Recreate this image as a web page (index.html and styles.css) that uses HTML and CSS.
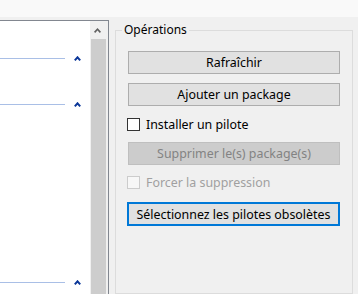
FILE: index.html
```html
<!DOCTYPE html>
<html lang="fr">
<head>
<meta charset="utf-8">
<link rel="stylesheet" href="styles.css">
</head>
<body>
<div class="window">
  <div class="topbar"></div>
  <div class="main">
    <div class="listbox">
      <div class="list-content">
        <div class="row r1"><span class="rule"></span><svg class="chev" width="7" height="5" viewBox="0 0 7 5"><polyline points="0.8,4.3 3.5,1.3 6.2,4.3" fill="none" stroke="#0b3799" stroke-width="2"/></svg></div>
        <div class="row r2"><span class="rule"></span><svg class="chev" width="7" height="5" viewBox="0 0 7 5"><polyline points="0.8,4.3 3.5,1.3 6.2,4.3" fill="none" stroke="#0b3799" stroke-width="2"/></svg></div>
        <div class="row r3"><span class="rule"></span><svg class="chev" width="7" height="5" viewBox="0 0 7 5"><polyline points="0.8,4.3 3.5,1.3 6.2,4.3" fill="none" stroke="#0b3799" stroke-width="2"/></svg></div>
      </div>
      <div class="scrollbar">
        <div class="arrow"><svg width="7" height="5" viewBox="0 0 7 5"><polyline points="0.6,4.4 3.5,1.2 6.4,4.4" fill="none" stroke="#606060" stroke-width="1.6"/></svg></div>
        <div class="thumb"></div>
      </div>
    </div>
    <fieldset class="ops">
      <legend class="ops-title">Opérations</legend>
      <button class="btn btn-first">Rafraîchir</button>
      <button class="btn btn-add">Ajouter un package</button>
      <label class="check check-install"><span class="box"></span><span class="check-text">Installer un pilote</span></label>
      <button class="btn btn-disabled" disabled>Supprimer le(s) package(s)</button>
      <label class="check check-disabled"><span class="box"></span><span class="check-text">Forcer la suppression</span></label>
      <button class="btn btn-focus">Sélectionnez les pilotes obsolètes</button>
    </fieldset>
  </div>
</div>
</body>
</html>
```

FILE: styles.css
```css
html, body {
  margin: 0;
  padding: 0;
}
body {
  width: 358px;
  height: 294px;
  overflow: hidden;
  background: #f0f0f0;
  font-family: "Noto Sans", "Open Sans", sans-serif;
  font-size: 12px;
  color: #000;
}
.window {
  display: flex;
  flex-direction: column;
  height: 294px;
}
.topbar {
  height: 17px;
  background: #f9f9f9;
  flex: none;
}
.main {
  display: flex;
  padding-top: 3px;
  flex: 1;
  min-height: 0;
}
.listbox {
  width: 109px;
  box-sizing: border-box;
  border-top: 1px solid #828790;
  border-right: 1px solid #828790;
  background: #f0f0f0;
  display: flex;
  flex: none;
}
.list-content {
  width: 90px;
  background: #fff;
  display: flex;
  flex-direction: column;
}
.row {
  display: flex;
  align-items: center;
  height: 5px;
}
.r1 { margin-top: 35px; }
.r2 { margin-top: 41px; }
.r3 { margin-top: 173px; }
.rule {
  display: block;
  width: 65px;
  height: 1px;
  background: #a9bfe6;
}
.chev {
  display: block;
  margin-left: 9px;
}
.scrollbar {
  width: 17px;
  display: flex;
  flex-direction: column;
  background: #f0f0f0;
}
.arrow {
  height: 17px;
  display: flex;
  align-items: center;
  justify-content: center;
  padding-right: 2px;
  box-sizing: border-box;
  padding-top: 2px;
}
.arrow svg { display: block; }
.thumb {
  flex: 1;
  margin: 1px 1px 0 1px;
  background: #cdcdcd;
}
.ops {
  box-sizing: border-box;
  width: 238px;
  min-width: 0;
  margin: 2px 0 0 6px;
  padding: 13px 12px 0 12px;
  border: 1px solid #dcdcdc;
  display: flex;
  flex-direction: column;
  align-items: stretch;
}
.ops-title {
  padding: 0 2px;
  margin-left: -6px;
  line-height: 16px;
  font-size: 12px;
}
.btn {
  display: flex;
  align-items: center;
  justify-content: center;
  height: 23px;
  padding: 0;
  margin: 0;
  box-sizing: border-box;
  border: 1px solid #adadad;
  background: #e1e1e1;
  font-family: inherit;
  font-size: 12.4px;
  color: #000;
  width: 100%;
}
.btn-add { margin-top: 9px; }
.btn-disabled {
  margin-top: 11px;
  background: #cccccc;
  border-color: #bfbfbf;
  color: #838383;
}
.btn-focus {
  margin-top: 13px;
  height: 24px;
  border: 2px solid #0078d7;
  width: calc(100% + 1px);
  margin-left: -1px;
}
.check {
  display: flex;
  align-items: center;
  height: 13px;
  margin-left: -1px;
  font-size: 12.4px;
}
.check-install { margin-top: 12px; }
.check-disabled { margin-top: 11px; color: #a0a0a0; }
.box {
  width: 13px;
  height: 13px;
  box-sizing: border-box;
  border: 1px solid #333333;
  background: #fff;
  flex: none;
}
.check-disabled .box {
  border-color: #cccccc;
  background: #f7f7f7;
}
.check-text {
  margin-left: 6px;
  line-height: 16px;
}
```
